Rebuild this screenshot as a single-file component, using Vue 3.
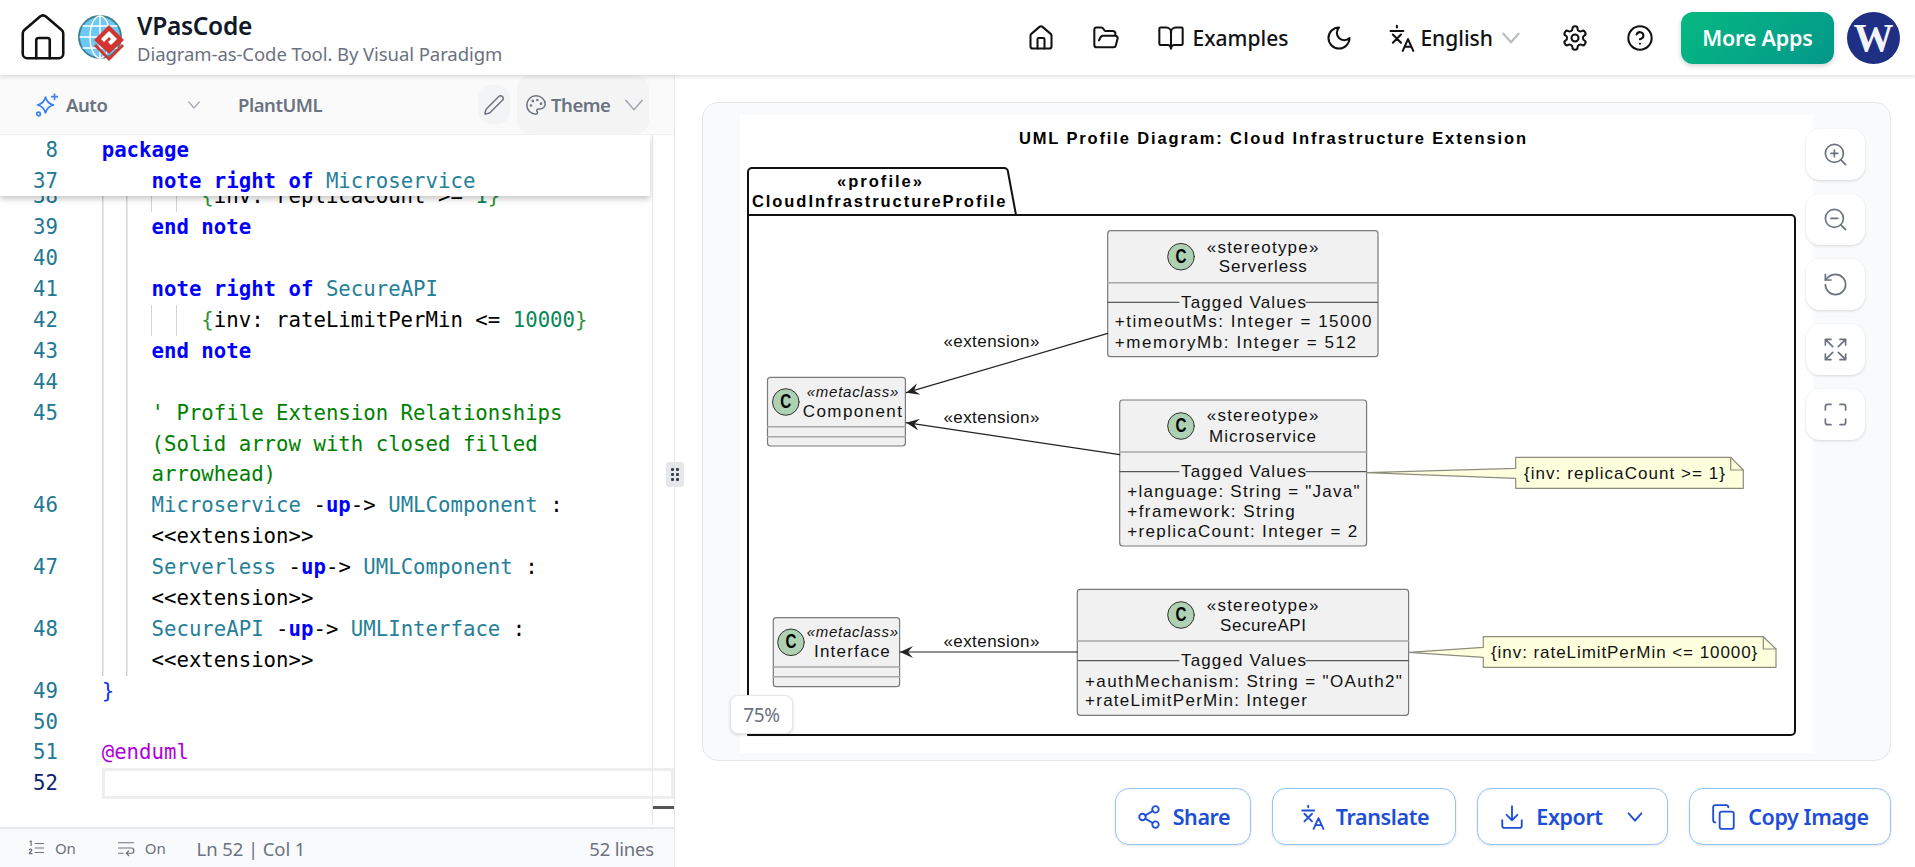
<template>
  <div class="page">
    <header class="topbar">
      <svg class="big-home" viewBox="0 0 24 24"><path d="M15 21v-8a1 1 0 0 0-1-1h-4a1 1 0 0 0-1 1v8" /><path d="M3 10a2 2 0 0 1 .709-1.528l7-5.999a2 2 0 0 1 2.582 0l7 5.999A2 2 0 0 1 21 10v9a2 2 0 0 1-2 2H5a2 2 0 0 1-2-2z" /></svg>
      <svg class="logo" viewBox="0 0 46 49">
        <circle cx="22" cy="24" r="21" fill="#6ec8f6" stroke="#3f8291" stroke-width="2" />
        <g fill="none" stroke="#fff" stroke-width="1.4">
          <ellipse cx="22" cy="24" rx="10" ry="21" />
          <path d="M22 3v42M2 24h40M5 13h34M5 35h34" />
        </g>
        <path d="M31 12 46 27 31 41 16 27z" fill="#d2352f" />
        <path d="M31 18 39 26 33 32 30 29 33 26 31 24 26 29 23 26z" fill="#fff" />
        <path d="M16 33 31 48 46 33 44 31 31 44 18 31z" fill="#d2352f" />
      </svg>
      <div class="brand">
        <div class="brand-name">VPasCode</div>
        <div class="brand-sub">Diagram-as-Code Tool. By Visual Paradigm</div>
      </div>
      <nav class="nav">
        <svg class="ico" viewBox="0 0 24 24"><path d="M15 21v-8a1 1 0 0 0-1-1h-4a1 1 0 0 0-1 1v8" /><path d="M3 10a2 2 0 0 1 .709-1.528l7-5.999a2 2 0 0 1 2.582 0l7 5.999A2 2 0 0 1 21 10v9a2 2 0 0 1-2 2H5a2 2 0 0 1-2-2z" /></svg>
        <svg class="ico" viewBox="0 0 24 24"><path d="m6 14 1.5-2.9A2 2 0 0 1 9.24 10H20a2 2 0 0 1 1.94 2.5l-1.54 6a2 2 0 0 1-1.95 1.5H4a2 2 0 0 1-2-2V5a2 2 0 0 1 2-2h3.9a2 2 0 0 1 1.69.9l.81 1.2a2 2 0 0 0 1.67.9H18a2 2 0 0 1 2 2v2" /></svg>
        <div class="nav-item">
          <svg class="ico" viewBox="0 0 24 24"><path d="M12 7v14" /><path d="M3 18a1 1 0 0 1-1-1V4a1 1 0 0 1 1-1h5a4 4 0 0 1 4 4 4 4 0 0 1 4-4h5a1 1 0 0 1 1 1v13a1 1 0 0 1-1 1h-6a3 3 0 0 0-3 3 3 3 0 0 0-3-3z" /></svg>
          <span>Examples</span>
        </div>
        <svg class="ico" viewBox="0 0 24 24"><path d="M12 3a6 6 0 0 0 9 9 9 9 0 1 1-9-9Z" /></svg>
        <div class="nav-item nav-lang">
          <svg class="ico" viewBox="0 0 24 24"><path d="M8.5 1.5v1.5M3 6h11M5 9l7 7M12 9l-7 7" /><path d="m22.5 23-4.5-10-4.5 10M15 19.5h6" /></svg>
          <span>English</span>
          <svg class="chev-light" viewBox="0 0 24 24"><path d="m5 8 7 8 7-8" /></svg>
        </div>
        <svg class="ico" viewBox="0 0 24 24"><path d="M12.22 2h-.44a2 2 0 0 0-2 2v.18a2 2 0 0 1-1 1.73l-.43.25a2 2 0 0 1-2 0l-.15-.08a2 2 0 0 0-2.73.73l-.22.38a2 2 0 0 0 .73 2.73l.15.1a2 2 0 0 1 1 1.72v.51a2 2 0 0 1-1 1.74l-.15.09a2 2 0 0 0-.73 2.73l.22.38a2 2 0 0 0 2.73.73l.15-.08a2 2 0 0 1 2 0l.43.25a2 2 0 0 1 1 1.73V20a2 2 0 0 0 2 2h.44a2 2 0 0 0 2-2v-.18a2 2 0 0 1 1-1.73l.43-.25a2 2 0 0 1 2 0l.15.08a2 2 0 0 0 2.73-.73l.22-.39a2 2 0 0 0-.73-2.73l-.15-.08a2 2 0 0 1-1-1.74v-.5a2 2 0 0 1 1-1.74l.15-.09a2 2 0 0 0 .73-2.73l-.22-.38a2 2 0 0 0-2.73-.73l-.15.08a2 2 0 0 1-2 0l-.43-.25a2 2 0 0 1-1-1.73V4a2 2 0 0 0-2-2z" /><circle cx="12" cy="12" r="3" /></svg>
        <svg class="ico" viewBox="0 0 24 24"><circle cx="12" cy="12" r="10" /><path d="M9.09 9a3 3 0 0 1 5.83 1c0 2-3 3-3 3" /><path d="M12 17h.01" /></svg>
        <div class="nav-end">
          <button class="more">More Apps</button>
          <div class="avatar">W</div>
        </div>
      </nav>
    </header>

    <main class="main">
      <section class="editor">
        <div class="toolbar">
          <div class="tb-select">
            <svg class="spark" viewBox="0 0 24 24"><path d="M10.5 4c.9 4.2 3.4 6.8 8 8-4.600 1.200-7.100 3.800-8 8-.9-4.200-3.400-6.800-8-8 4.600-1.200 7.100-3.800 8-8z" /><path d="M19.500 1v5.500M16.700 3.700h5.600" /><circle cx="3.500" cy="21" r="1.800" /></svg>
            <span>Auto</span>
            <svg class="chev-small" viewBox="0 0 24 24"><path d="m5 8 7 8 7-8" /></svg>
          </div>
          <div class="tb-lang">PlantUML</div>
          <div class="tb-pencil">
            <svg viewBox="0 0 24 24"><path d="M21.174 6.812a1 1 0 0 0-3.986-3.987L3.842 16.174a2 2 0 0 0-.5.83l-1.321 4.352a.5.5 0 0 0 .623.622l4.353-1.32a2 2 0 0 0 .83-.497z" /></svg>
          </div>
          <div class="tb-theme">
            <svg class="palette" viewBox="0 0 24 24"><circle cx="13.5" cy="6.5" r=".6" /><circle cx="17.5" cy="10.5" r=".6" /><circle cx="8.5" cy="7.5" r=".6" /><circle cx="6.5" cy="12.5" r=".6" /><path d="M12 2C6.5 2 2 6.5 2 12s4.5 10 10 10c.926 0 1.648-.746 1.648-1.688 0-.437-.18-.835-.437-1.125-.29-.289-.438-.652-.438-1.125a1.64 1.64 0 0 1 1.668-1.668h1.996c3.051 0 5.555-2.503 5.555-5.554C21.965 6.012 17.461 2 12 2z" /></svg>
            <span>Theme</span>
            <svg class="chev-big" viewBox="0 0 24 24"><path d="m5 8 7 8 7-8" /></svg>
          </div>
        </div>

        <div class="code">
          <div class="rows">
            <div v-for="(row, i) in rows" :key="i" class="row">
              <div class="num" :class="{ active: row.n === 52 }">{{ row.n }}</div>
              <div class="line" :class="['g' + row.g, { current: row.n === 52 }]"><span v-for="(tok, j) in row.t" :key="j" :class="tok[1]">{{ tok[0] }}</span></div>
            </div>
          </div>
          <div class="sticky">
            <div v-for="row in stickyRows" :key="row.n" class="row">
              <div class="num">{{ row.n }}</div>
              <div class="line"><span v-for="(tok, j) in row.t" :key="j" :class="tok[1]">{{ tok[0] }}</span></div>
            </div>
          </div>
          <div class="ruler"></div>
          <div class="ruler-mark"></div>
        </div>

        <div class="status">
          <svg class="st-ico" viewBox="0 0 24 24"><path d="M11 6h11M11 12h11M11 18h11M4 3.5l1.5-1v6M3 14.5c.5-1.6 3.5-1.5 3.5.3 0 1.4-3.5 2.6-3.5 4.7h3.7" /></svg>
          <span class="st-on">On</span>
          <svg class="st-ico st-gap" viewBox="0 0 24 24"><path d="M2 5h20M2 12h17a3 3 0 0 1 0 7h-6M2 19h6M15.5 16l-3 3 3 3" /></svg>
          <span class="st-on">On</span>
          <span class="st-pos">Ln 52 | Col 1</span>
          <span class="st-lines">52 lines</span>
        </div>
      </section>

      <div class="grip"><i></i><i></i><i></i><i></i><i></i><i></i></div>

      <section class="preview">
        <div class="canvas">
          <svg class="uml" viewBox="740 115 1073 638" width="1073" height="638">
            <defs>
              <marker id="head" viewBox="0 0 14 12" refX="0" refY="6" markerWidth="14" markerHeight="12" markerUnits="userSpaceOnUse" orient="auto">
                <path d="M0 6 13 0 8 6 13 12z" fill="#222" />
              </marker>
            </defs>
            <rect x="740" y="115" width="1073" height="638" fill="#fff" />

            <path class="pkg" d="M748 215V172a4 4 0 0 1 4-4H1004a4 4 0 0 1 4 4L1016 215H1791a4 4 0 0 1 4 4V731a4 4 0 0 1-4 4H748z" />
            <path class="pkg" d="M748 215H1016" />

            <g v-for="b in boxes" :key="b.x">
              <rect class="box" :x="b.x" :y="b.y" :width="b.w" :height="b.h" rx="3" />
              <path class="sep" :d="b.seps" />
              <path v-if="b.dark" class="tag-line" :d="b.dark" />
            </g>
            <g v-for="c in circles" :key="c[0] + c[1]">
              <circle class="spot" :cx="c[0]" :cy="c[1]" r="13.3" />
              <text class="spot-c" :x="c[0]" :y="c[1] + 6" textLength="11" lengthAdjust="spacingAndGlyphs">C</text>
            </g>

            <line class="edge" x1="906.3" y1="392.7" x2="1107.7" y2="333.3" marker-start="url(#head)" />
            <line class="edge" x1="906.3" y1="422.7" x2="1119.7" y2="454.7" marker-start="url(#head)" />
            <line class="edge" x1="900" y1="652" x2="1077.3" y2="652" marker-start="url(#head)" />

            <path class="note" d="M1366.6 472.7 1515.7 468.3V457.3H1730.7L1743.3 470V488.3H1515.7V478.3z" />
            <path class="note-fold" d="M1730.7 457.3V470H1743.3" />
            <path class="note" d="M1409 652.3 1483.3 647.3V636.7H1763.3L1776 649V667.3H1483.3V657.3z" />
            <path class="note-fold" d="M1763.3 636.7V649H1776" />

            <text v-for="l in labels" :key="l.t + l.y" :class="l.c" :x="l.x" :y="l.y" :textLength="l.w" lengthAdjust="spacing">{{ l.t }}</text>
          </svg>

          <div class="zooms">
            <div class="zbtn"><svg viewBox="0 0 24 24"><circle cx="11" cy="11" r="8" /><path d="m21 21-4.3-4.3M11 8v6M8 11h6" /></svg></div>
            <div class="zbtn"><svg viewBox="0 0 24 24"><circle cx="11" cy="11" r="8" /><path d="m21 21-4.3-4.3M8 11h6" /></svg></div>
            <div class="zbtn"><svg viewBox="0 0 24 24"><path d="M3 12a9 9 0 1 0 9-9 9.75 9.75 0 0 0-6.74 2.74L3 8" /><path d="M3 3v5h5" /></svg></div>
            <div class="zbtn"><svg viewBox="0 0 24 24"><path d="M3 8V3h5M3 3l6.500 6.500M21 8V3h-5M21 3l-6.500 6.500M3 16v5h5M3 21l6.500-6.500M21 16v5h-5M21 21l-6.500-6.500" /></svg></div>
            <div class="zbtn"><svg viewBox="0 0 24 24"><path d="M8 3H5a2 2 0 0 0-2 2v3M21 8V5a2 2 0 0 0-2-2h-3M3 16v3a2 2 0 0 0 2 2h3M16 21h3a2 2 0 0 0 2-2v-3" /></svg></div>
          </div>
          <div class="percent">75%</div>
        </div>

        <div class="actions">
          <button class="act act-share">
            <svg viewBox="0 0 24 24"><circle cx="18" cy="5" r="3" /><circle cx="6" cy="12" r="3" /><circle cx="18" cy="19" r="3" /><path d="m8.59 13.51 6.83 3.98M15.41 6.51l-6.82 3.98" /></svg>
            Share
          </button>
          <button class="act act-translate">
            <svg viewBox="0 0 24 24"><path d="M8.5 1.5v1.5M3 6h11M5 9l7 7M12 9l-7 7" /><path d="m22.5 23-4.5-10-4.5 10M15 19.5h6" /></svg>
            Translate
          </button>
          <button class="act act-export">
            <svg viewBox="0 0 24 24"><path d="M12 2v13M7 10l5 5 5-5" /><path d="M3 15v5a2 2 0 0 0 2 2h14a2 2 0 0 0 2-2v-5" /></svg>
            Export
            <svg class="act-chev" viewBox="0 0 24 24"><path d="m5 8 7 8 7-8" /></svg>
          </button>
          <button class="act act-copy">
            <svg viewBox="0 0 24 24"><rect x="8" y="7" width="13" height="16" rx="2" /><path d="M4 17a2 2 0 0 1-2-2V3a2 2 0 0 1 2-2h10a2 2 0 0 1 2 2" /></svg>
            Copy Image
          </button>
        </div>
      </section>
    </main>
  </div>
</template>

<script setup>
const sp = (n) => ' '.repeat(n)

const stickyRows = [
  { n: 8, t: [['package', 'kw']] },
  { n: 37, t: [[sp(4)], ['note right of', 'kw'], [' '], ['Microservice', 'ty']] }
]

const ext = [[sp(4)], ['<<extension>>']]

const rows = [
  { n: 38, g: 4, t: [[sp(8)], ['{', 'br'], ['inv: replicaCount >= '], ['1', 'nu'], ['}', 'br']] },
  { n: 39, g: 2, t: [[sp(4)], ['end note', 'kw']] },
  { n: 40, g: 2, t: [] },
  { n: 41, g: 2, t: [[sp(4)], ['note right of', 'kw'], [' '], ['SecureAPI', 'ty']] },
  { n: 42, g: 4, t: [[sp(8)], ['{', 'br'], ['inv: rateLimitPerMin <= '], ['10000', 'nu'], ['}', 'br']] },
  { n: 43, g: 2, t: [[sp(4)], ['end note', 'kw']] },
  { n: 44, g: 2, t: [] },
  { n: 45, g: 2, t: [[sp(4)], ["' Profile Extension Relationships", 'cm']] },
  { n: '', g: 2, t: [[sp(4)], ['(Solid arrow with closed filled', 'cm']] },
  { n: '', g: 2, t: [[sp(4)], ['arrowhead)', 'cm']] },
  { n: 46, g: 2, t: [[sp(4)], ['Microservice', 'ty'], [' -'], ['up', 'kw'], ['-> '], ['UMLComponent', 'ty'], [' :']] },
  { n: '', g: 2, t: ext },
  { n: 47, g: 2, t: [[sp(4)], ['Serverless', 'ty'], [' -'], ['up', 'kw'], ['-> '], ['UMLComponent', 'ty'], [' :']] },
  { n: '', g: 2, t: ext },
  { n: 48, g: 2, t: [[sp(4)], ['SecureAPI', 'ty'], [' -'], ['up', 'kw'], ['-> '], ['UMLInterface', 'ty'], [' :']] },
  { n: '', g: 2, t: ext },
  { n: 49, g: 0, t: [['}', 'blue']] },
  { n: 50, g: 0, t: [] },
  { n: 51, g: 0, t: [['@enduml', 'at']] },
  { n: 52, g: 0, t: [] }
]

// diagram geometry, in page pixels (the svg viewBox matches the screen)
const boxes = [
  { x: 1107.7, y: 230.7, w: 270.3, h: 126, seps: 'M1107.7 282.7H1378', dark: 'M1108 302.3H1179M1306 302.3H1377.5' },
  { x: 1119.7, y: 400, w: 246.9, h: 146, seps: 'M1119.7 452H1366.6', dark: 'M1120 471.7H1179M1306 471.7H1366' },
  { x: 1077.3, y: 589.3, w: 331.3, h: 126, seps: 'M1077.3 641H1408.6', dark: 'M1078 660.7H1179M1306 660.7H1408' },
  { x: 767.5, y: 377.3, w: 137.9, h: 68.7, seps: 'M767.5 426.7H905.4M767.5 436.7H905.4' },
  { x: 773.3, y: 617.7, w: 126.3, h: 69, seps: 'M773.3 667H899.6M773.3 676.7H899.6' }
]

const circles = [
  [1181, 256.7],
  [1181, 426],
  [1181, 615],
  [785.8, 402],
  [791, 642.3]
]

const labels = [
  { t: 'UML Profile Diagram: Cloud Infrastructure Extension', x: 1019, y: 144, w: 507, c: 'bold' },
  { t: '«profile»', x: 837, y: 186.7, w: 85, c: 'bold' },
  { t: 'CloudInfrastructureProfile', x: 752, y: 206.7, w: 253.5, c: 'bold' },
  { t: '«stereotype»', x: 1206.8, y: 252.7, w: 111.6, c: 'txt' },
  { t: 'Serverless', x: 1218.8, y: 272.3, w: 88, c: 'txt' },
  { t: 'Tagged Values', x: 1181, y: 308, w: 125, c: 'txt' },
  { t: '+timeoutMs: Integer = 15000', x: 1114.8, y: 327.3, w: 256.7, c: 'txt' },
  { t: '+memoryMb: Integer = 512', x: 1114.8, y: 347.7, w: 241.2, c: 'txt' },
  { t: '«extension»', x: 943.4, y: 347.3, w: 96, c: 'txt' },
  { t: '«extension»', x: 943.4, y: 423.3, w: 96, c: 'txt' },
  { t: '«metaclass»', x: 806.8, y: 397.3, w: 91.5, c: 'ital' },
  { t: 'Component', x: 802.8, y: 416.7, w: 99.1, c: 'txt' },
  { t: '«stereotype»', x: 1206.8, y: 421.3, w: 111.6, c: 'txt' },
  { t: 'Microservice', x: 1209, y: 441.7, w: 107, c: 'txt' },
  { t: 'Tagged Values', x: 1181, y: 476.7, w: 125, c: 'txt' },
  { t: '+language: String = "Java"', x: 1127.3, y: 496.7, w: 232.2, c: 'txt' },
  { t: '+framework: String', x: 1127.3, y: 516.7, w: 167.4, c: 'txt' },
  { t: '+replicaCount: Integer = 2', x: 1127.3, y: 536.7, w: 229.9, c: 'txt' },
  { t: '{inv: replicaCount >= 1}', x: 1524, y: 479.3, w: 201, c: 'txt' },
  { t: '«stereotype»', x: 1206.8, y: 610.7, w: 111.6, c: 'txt' },
  { t: 'SecureAPI', x: 1220, y: 630.7, w: 86, c: 'txt' },
  { t: 'Tagged Values', x: 1181, y: 666, w: 125, c: 'txt' },
  { t: '+authMechanism: String = "OAuth2"', x: 1085, y: 686.7, w: 316.9, c: 'txt' },
  { t: '+rateLimitPerMin: Integer', x: 1085, y: 706, w: 221.8, c: 'txt' },
  { t: '{inv: rateLimitPerMin <= 10000}', x: 1491, y: 657.7, w: 266.3, c: 'txt' },
  { t: '«extension»', x: 943.4, y: 646.7, w: 96, c: 'txt' },
  { t: '«metaclass»', x: 806.8, y: 637.3, w: 91.2, c: 'ital' },
  { t: 'Interface', x: 814, y: 656.7, w: 75.8, c: 'txt' }
]
</script>

<style>
html, body { margin: 0; background: #fff; overflow: hidden; }
</style>

<style scoped>
.page { width: 1915px; height: 867px; display: flex; flex-direction: column; font-family: "Noto Sans", "Open Sans", sans-serif; color: #111827; }
svg { fill: none; stroke: currentColor; stroke-width: 2; stroke-linecap: round; stroke-linejoin: round; flex: none; }
button { font-family: inherit; cursor: pointer; }

.topbar { height: 75px; flex: none; display: flex; align-items: center; padding: 0 15px 0 16px; background: #fff; box-shadow: 0 2px 4px rgba(0,0,0,.12); position: relative; z-index: 3; box-sizing: border-box; }
.big-home { width: 54px; height: 54px; stroke-width: 1.15; color: #111; }
.logo { width: 46px; height: 49px; margin-left: 8px; stroke-width: 0; }
.brand { margin-left: 13px; display: flex; flex-direction: column; }
.brand-name { font-size: 24.5px; font-weight: 600; line-height: 32px; color: #111827; letter-spacing: -.3px; }
.brand-sub { font-size: 18.5px; line-height: 24px; color: #6b7280; letter-spacing: -.07px; }
.nav { margin-left: auto; display: flex; align-items: center; gap: 37px; color: #111; }
.ico { width: 28px; height: 28px; stroke-width: 1.75; }
.nav-item { display: flex; align-items: center; gap: 7px; font-size: 21px; font-weight: 500; }
.nav-lang { gap: 5px; margin-left: -3px; }
.chev-light { width: 26px; height: 26px; color: #b8bcc4; margin-left: 0; }
.nav-end { display: flex; align-items: center; gap: 13px; margin-left: -10px; }
.more { width: 153px; height: 52px; border: 0; border-radius: 12px; background: linear-gradient(135deg, #06b981, #03978b); color: #fff; font-size: 21.5px; font-weight: 600; letter-spacing: -.2px; box-shadow: 0 2px 5px rgba(0,0,0,.18); }
.avatar { width: 53px; height: 52px; border-radius: 50%; background: #1e2f84; color: #f3f4fb; font-family: "Liberation Serif", serif; font-weight: 700; font-size: 40px; display: flex; align-items: center; justify-content: center; }

.main { flex: 1; display: flex; min-height: 0; position: relative; }
.editor { width: 675px; flex: none; display: flex; flex-direction: column; border-right: 1px solid #e5e7eb; box-sizing: border-box; min-height: 0; }

.toolbar { height: 60px; flex: none; display: flex; align-items: center; padding: 0 25px 0 35px; background: #fafafa; border-bottom: 1px solid #f0f0f0; box-sizing: border-box; color: #6b7280; font-size: 18.5px; font-weight: 600; letter-spacing: -.45px; }
.tb-select { width: 170px; display: flex; align-items: center; gap: 7px; }
.spark { width: 24px; height: 24px; color: #3b82f6; stroke-width: 1.7; }
.chev-small { width: 18px; height: 18px; color: #a3a8b1; stroke-width: 1.6; }
.chev-big { width: 28px; height: 28px; color: #a3a8b1; stroke-width: 1.4; margin-left: 5px; }
.tb-select .chev-small { margin-left: auto; margin-right: 2px; }
.tb-lang { margin-left: 33px; }
.tb-pencil { margin-left: auto; width: 32px; height: 39px; border-radius: 13px; background: #f3f4f6; display: flex; align-items: center; justify-content: center; }
.tb-pencil svg { width: 22px; height: 22px; stroke-width: 1.6; }
.tb-theme { margin-left: 7px; width: 132px; height: 59px; border-radius: 14px; background: #f4f4f5; display: flex; align-items: center; padding-left: 8px; box-sizing: border-box; gap: 4px; }
.palette { width: 22px; height: 22px; stroke-width: 1.7; }

.code { flex: 1; position: relative; overflow: hidden; min-height: 0; background: #fff; }
.rows { padding-top: 46.4px; }
.row { display: flex; height: 30.9px; line-height: 30.9px; font-family: "DejaVu Sans Mono", "Liberation Mono", monospace; font-size: 20.7px; white-space: pre; }
.num { width: 58px; flex: none; text-align: right; color: #237893; }
.num.active { color: #0b216f; }
.line { margin-left: 43.7px; flex: 1; color: #000; background-repeat: no-repeat; }
.g2 { background-image: linear-gradient(#d3d3d3, #d3d3d3), linear-gradient(#d3d3d3, #d3d3d3); background-size: 1.5px 100%, 1.5px 100%; background-position: 0 0, 24.8px 0; }
.g4 { background-image: linear-gradient(#d3d3d3, #d3d3d3), linear-gradient(#d3d3d3, #d3d3d3), linear-gradient(#d3d3d3, #d3d3d3), linear-gradient(#d3d3d3, #d3d3d3); background-size: 1.5px 100%, 1.5px 100%, 1px 100%, 1px 100%; background-position: 0 0, 24.8px 0, 49.6px 0, 74.4px 0; }
.current { box-shadow: inset 0 0 0 3px #eee; }
.kw { color: #0000ff; font-weight: 700; }
.ty { color: #267f99; }
.nu { color: #098658; }
.br { color: #319331; }
.cm { color: #008000; }
.at { color: #af00db; }
.blue { color: #0431fa; }
.sticky { position: absolute; top: 0; left: 0; width: 650px; height: 60.7px; background: #fff; box-shadow: 0 3px 6px rgba(0,0,0,.22); }
.ruler { position: absolute; top: 0; bottom: 2px; left: 652px; width: 1px; background: #e5e5e5; }
.ruler-mark { position: absolute; left: 653px; right: 0; top: 671px; height: 3px; background: #555; }

.status { height: 40px; flex: none; display: flex; align-items: center; background: #f9fafb; border-top: 2px solid #e5e7eb; box-sizing: border-box; padding: 0 20px 0 27px; color: #6b7280; font-size: 18.5px; letter-spacing: -.1px; }
.st-ico { width: 18px; height: 18px; stroke-width: 1.6; }
.st-gap { margin-left: 41px; }
.st-on { font-size: 15px; margin-left: 10px; }
.st-pos { margin-left: 31px; color: #6b7280; }
.st-lines { margin-left: auto; letter-spacing: -.2px; }

.grip { position: absolute; left: 666px; top: 387px; width: 18px; height: 25px; background: #e5e7eb; border-radius: 3px; display: grid; grid-template-columns: 3px 3px; gap: 2px 2px; justify-content: center; align-content: center; z-index: 2; }
.grip i { width: 3px; height: 3px; background: #374151; border-radius: 1px; }

.preview { flex: 1; display: flex; flex-direction: column; padding: 27px 24px 22px 27px; min-width: 0; box-sizing: border-box; }
.canvas { flex: 1; position: relative; background: #f8fafc; border: 1px solid #e5e7eb; border-radius: 16px; box-sizing: border-box; padding: 12px 0 0 37px; min-height: 0; }
.uml { display: block; stroke: none; fill: #000; font-family: "Liberation Sans", Arial, sans-serif; }
.uml .bold { font-size: 16.5px; font-weight: 700; fill: #000; stroke: none; }
.uml .txt { font-size: 17px; fill: #111; stroke: none; }
.uml .ital { font-size: 15px; font-style: italic; fill: #111; stroke: none; }
.uml .pkg { fill: none; stroke: #111; stroke-width: 2; }
.uml .box { fill: #f1f1f1; stroke: #7a7a7a; stroke-width: 1.2; }
.uml .sep { fill: none; stroke: #a8a8a8; stroke-width: 1.5; }
.uml .tag-line { fill: none; stroke: #333; stroke-width: 1; }
.uml .spot { fill: #add1b2; stroke: #333; stroke-width: 1; }
.uml .spot-c { font-size: 20px; font-weight: 700; text-anchor: middle; fill: #000; stroke: none; }
.uml .edge { stroke: #222; stroke-width: 1.2; fill: none; }
.uml .note { fill: #feffdd; stroke: #8d8d7d; stroke-width: 1.2; }
.uml .note-fold { fill: none; stroke: #8d8d7d; stroke-width: 1.2; }

.zooms { position: absolute; top: 26px; left: 1103px; display: flex; flex-direction: column; gap: 14px; }
.zbtn { width: 59px; height: 51px; background: #fff; border-radius: 14px; box-shadow: 0 1px 3px rgba(0,0,0,.14); display: flex; align-items: center; justify-content: center; color: #6b7280; }
.zbtn svg { width: 27px; height: 27px; stroke-width: 1.5; }
.percent { position: absolute; left: 27px; top: 592px; width: 63px; height: 39px; background: #fff; border: 1px solid #e5e7eb; border-radius: 8px; box-shadow: 0 1px 3px rgba(0,0,0,.16); box-sizing: border-box; display: flex; align-items: center; justify-content: center; color: #6b7280; font-size: 19px; letter-spacing: -.4px; }

.actions { flex: none; display: flex; justify-content: flex-end; gap: 21px; margin-top: 27px; }
.act { height: 57px; background: #fff; border: 1.5px solid #93c5fd; border-radius: 14px; color: #1d4ed8; font-size: 21.5px; font-weight: 600; letter-spacing: -.4px; display: flex; align-items: center; justify-content: center; gap: 11px; box-shadow: 0 1px 3px rgba(0,0,0,.1); padding: 0; }
.act svg { width: 26px; height: 26px; stroke-width: 1.7; }
.act-share { width: 136px; }
.act-translate { width: 184px; }
.act-export { width: 191px; }
.act-export .act-chev { width: 22px; height: 22px; margin-left: 10px; stroke-width: 2; }
.act-copy { width: 202px; }
</style>
